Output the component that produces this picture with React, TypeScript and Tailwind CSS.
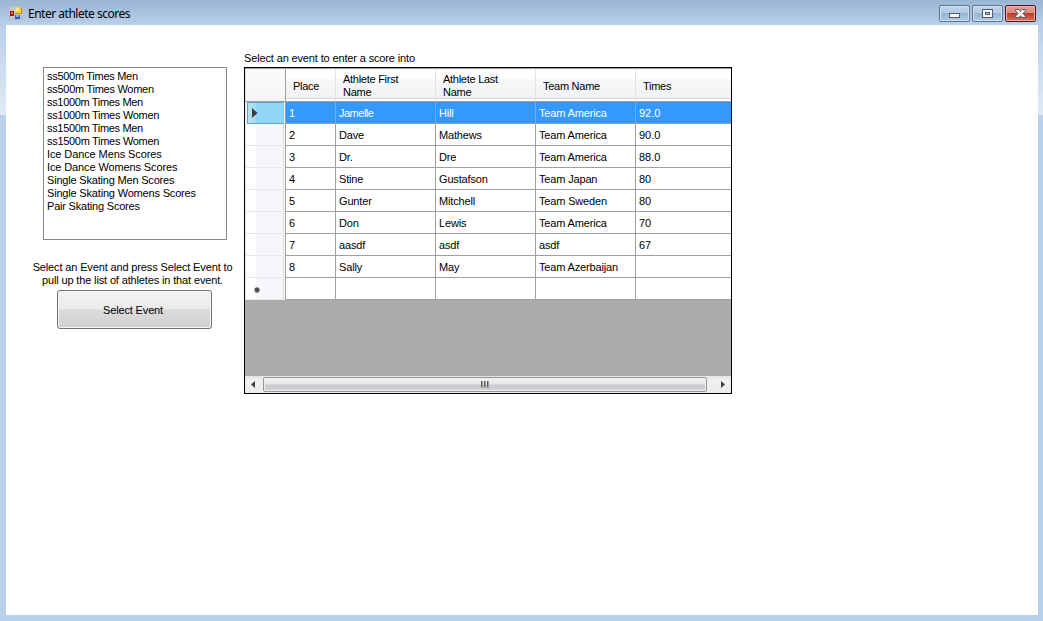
import React from "react";

const events = [
  { name: "ss500m Times Men", tracking: "tracking-[-0.29px]" },
  { name: "ss500m Times Women", tracking: "tracking-[-0.27px]" },
  { name: "ss1000m Times Men", tracking: "tracking-[-0.33px]" },
  { name: "ss1000m Times Women", tracking: "tracking-[-0.3px]" },
  { name: "ss1500m Times Men", tracking: "tracking-[-0.33px]" },
  { name: "ss1500m Times Women", tracking: "tracking-[-0.3px]" },
  { name: "Ice Dance Mens Scores", tracking: "tracking-[-0.1px]" },
  { name: "Ice Dance Womens Scores", tracking: "tracking-[-0.12px]" },
  { name: "Single Skating Men Scores", tracking: "tracking-[-0.19px]" },
  { name: "Single Skating Womens Scores", tracking: "tracking-[-0.18px]" },
  { name: "Pair Skating Scores", tracking: "tracking-[-0.2px]" },
];

const columns = ["Place", "Athlete First Name", "Athlete Last Name", "Team Name", "Times"];

const rows = [
  ["1", "Jamelle", "Hill", "Team America", "92.0"],
  ["2", "Dave", "Mathews", "Team America", "90.0"],
  ["3", "Dr.", "Dre", "Team America", "88.0"],
  ["4", "Stine", "Gustafson", "Team Japan", "80"],
  ["5", "Gunter", "Mitchell", "Team Sweden", "80"],
  ["6", "Don", "Lewis", "Team America", "70"],
  ["7", "aasdf", "asdf", "asdf", "67"],
  ["8", "Sally", "May", "Team Azerbaijan", ""],
  ["", "", "", "", ""],
];

const gridCols = "grid grid-cols-[41px_50px_100px_100px_100px_95px]";

function AppIcon() {
  return (
    <svg width="14" height="14" viewBox="0 0 14 14" shapeRendering="crispEdges">
      <rect width="14" height="14" fill="#b9bcc0" />
      <rect x="1" y="1" width="12" height="12" fill="#bfc8d2" />
      <rect x="1" y="5" width="4" height="5" fill="#a80f08" />
      <rect x="2" y="6" width="2" height="2" fill="#ee6d52" />
      <rect x="6" y="1" width="7" height="7" fill="#c78d0a" />
      <rect x="6" y="1" width="6" height="6" fill="#ffcf35" />
      <rect x="7" y="2" width="3" height="3" fill="#ffe88c" />
      <rect x="6" y="9" width="5" height="4" fill="#2b5cc4" />
      <rect x="7" y="9" width="3" height="2" fill="#7fa9f0" />
    </svg>
  );
}

function CaptionButton({ close, children }: { close?: boolean; children: React.ReactNode }) {
  const skin = close
    ? "border-[#4c1522] bg-[linear-gradient(#e5a197_0px,#dc8a7c_7px,#bd3a22_7px,#d0705a_15px)] shadow-[inset_0_0_0_1px_#e9b0a5]"
    : "border-[#5f7590] bg-[linear-gradient(#bfd3e8_0px,#b2cae3_7px,#94b3d3_7px,#b0cce6_15px)] shadow-[inset_0_0_0_1px_#cfe0f0]";
  return (
    <button className={`flex h-[17px] w-[31px] items-center justify-center rounded-[2px] border ${skin}`}>
      {children}
    </button>
  );
}

function TitleBar() {
  return (
    <header className="flex h-[25px] items-start bg-[linear-gradient(#9bb6d3_0px,#a5bfdc_10px,#b9d0ea_25px)] pl-[9px] pr-[7px]">
      <div className="pt-[6px]"><AppIcon /></div>
      <h1 className="ml-[5px] mt-[5px] whitespace-nowrap font-['Noto_Sans','Open_Sans',sans-serif] text-[12px] leading-[17px] tracking-[-0.49px] text-black">
        Enter athlete scores
      </h1>
      <div className="ml-auto flex gap-[2px] pt-[5px]">
        <CaptionButton>
          <svg width="11" height="15" viewBox="0 0 11 15" shapeRendering="crispEdges">
            <rect x="0" y="7" width="11" height="5" fill="#535b6d" />
            <rect x="1" y="8" width="9" height="3" fill="#f4f4f4" />
          </svg>
        </CaptionButton>
        <CaptionButton>
          <svg width="11" height="15" viewBox="0 0 11 15" shapeRendering="crispEdges">
            <rect x="0" y="3" width="11" height="9" fill="#535b6d" />
            <rect x="1" y="4" width="9" height="7" fill="#f4f4f4" />
            <rect x="3" y="6" width="5" height="3" fill="#535b6d" />
            <rect x="4" y="7" width="3" height="1" fill="#a9c3df" />
          </svg>
        </CaptionButton>
        <CaptionButton close>
          <svg width="13" height="15" viewBox="0 0 13 15">
            <path d="M1.5 3.5H4.8L6.5 5.2L8.2 3.5H11.5V4.8L9 7.5L11.5 10.2V11.5H8.2L6.5 9.8L4.8 11.5H1.5V10.2L4 7.5L1.5 4.8Z" fill="#f3f3f3" stroke="#535766" />
          </svg>
        </CaptionButton>
      </div>
    </header>
  );
}

function RowHeader({ index }: { index: number }) {
  const selected = index === 0;
  if (selected) {
    return (
      <div className="flex h-[22px] border-r border-[#a0a0a0] bg-[#e8f0f5] pl-[2px] pr-px">
        <div className="flex h-[22px] grow items-center border-b border-l border-t border-[#5fa6c6] bg-[linear-gradient(90deg,#b7dff2_0px,#a6daf2_8px,#8fd5f6_8px)] pl-[4px]">
          <svg width="6" height="10" viewBox="0 0 6 10"><path d="M0 0L5.5 5L0 10Z" fill="#3b3b3b" /></svg>
        </div>
      </div>
    );
  }
  return (
    <div className="flex h-[22px] items-center border-r border-[#a0a0a0] bg-[linear-gradient(90deg,#e5e5e5_1px,#ffffff_1px,#ffffff_11px,#f5f7fa_11px,#f4f6f9_38px,#dcdcdc_38px,#dcdcdc_39px,#ffffff_39px)]">
      <div className="flex h-full w-full items-center border-b border-[#e6e8ea] pl-[9px] pt-[2px]">
        {index === 8 && (
          <svg width="6" height="6" viewBox="0 0 6 6">
            <path d="M3 0V6M0 3H6M1 1L5 5M5 1L1 5" stroke="#444444" strokeWidth="1.1" />
          </svg>
        )}
      </div>
    </div>
  );
}

function ScoreGrid() {
  return (
    <section className="flex h-[327px] w-[488px] flex-col overflow-hidden border border-black bg-[#ababab]">
      <div className={`${gridCols} h-[34px] shrink-0 border-b border-t border-[#a0a0a0] bg-[linear-gradient(#ffffff_0px,#ffffff_10px,#f7f8fa_10px,#f1f2f4_29px,#d5d5d5_29px,#d5d5d5_30px,#ffffff_30px)]`}>
        <div className="border-l border-r border-l-[#e0e0e0] border-r-[#a0a0a0] bg-[linear-gradient(#fbfbfb,#f4f5f7)]" />
        {columns.map((name, i) => (
          <div key={name} className={`flex items-center pl-[7px] pr-[20px] pt-[2px] leading-[13px] tracking-[-0.27px] ${i < 4 ? "border-r border-[#e1e2e3]" : ""}`}>
            {name}
          </div>
        ))}
      </div>
      {rows.map((row, r) => (
        <div key={r} className={`${gridCols} h-[22px] shrink-0 ${r === 0 ? "bg-[#3399ff] text-white" : "bg-white"}`}>
          <RowHeader index={r} />
          {row.map((cell, c) => (
            <div key={c} className={`flex items-center whitespace-nowrap border-b border-[#a0a0a0] pl-[3px] pt-[2px] leading-[13px] ${cell === "Jamelle" ? "tracking-[-0.5px]" : c === 4 ? "tracking-normal" : "tracking-[-0.16px]"} ${c < 4 ? "border-r" : ""}`}>
              {cell}
            </div>
          ))}
        </div>
      ))}
      <div className="mt-auto flex h-[17px] shrink-0 bg-[linear-gradient(#e3e3e3,#f0f0f0_4px,#ececec)]">
        <div className="flex w-[18px] items-center justify-center pr-[2px]">
          <svg width="4" height="7" viewBox="0 0 4 7"><path d="M4 0V7L0 3.5Z" fill="#404040" /></svg>
        </div>
        <div className="mt-px flex h-[15px] w-[444px] items-center justify-center rounded-[2px] border border-[#979797] bg-[linear-gradient(#f4f4f4_0px,#e6e6e7_6px,#c9cacd_7px,#d3d4d7_13px)] shadow-[inset_0_0_0_1px_#eeeeee]">
          <svg width="8" height="7" viewBox="0 0 8 7" shapeRendering="crispEdges">
            <path d="M0 0H2V7H0ZM3 0H5V7H3ZM6 0H8V7H6Z" fill="#a0a0a0" />
            <path d="M0 0H1V6H0ZM3 0H4V6H3ZM6 0H7V6H6Z" fill="#5b5b5b" />
          </svg>
        </div>
        <div className="flex grow items-center justify-center pl-[7px]">
          <svg width="4" height="7" viewBox="0 0 4 7"><path d="M0 0V7L4 3.5Z" fill="#404040" /></svg>
        </div>
      </div>
    </section>
  );
}

export default function App() {
  return (
    <div className="flex h-[621px] w-[1043px] flex-col overflow-hidden bg-[#b9d1ea] font-['Liberation_Sans',Arial,sans-serif] text-[11px] leading-[13px] text-black">
      <TitleBar />
      <div className="flex h-[590px] bg-[linear-gradient(#b9d0ea_0px,#dfeaf6_90px,#b9d1ea_90px)]">
        <main className="ml-[6px] mr-[5px] flex grow bg-white">
          <div className="flex w-[238px] flex-col pl-[25px] pt-[42px]">
            <ul className="ml-3 h-[173px] w-[184px] border border-[#828790] pl-[3px] pt-[2px]">
              {events.map((e) => (
                <li key={e.name} className={`whitespace-nowrap ${e.tracking}`}>{e.name}</li>
              ))}
            </ul>
            <p className="mt-[21px] w-[203px] whitespace-nowrap text-center tracking-[-0.14px]">
              Select an Event and press Select Event to
              <br />
              pull up the list of athletes in that event.
            </p>
            <button className="ml-[26px] mt-[3px] h-[39px] w-[155px] rounded-[3px] border border-[#707070] bg-[linear-gradient(#f2f2f2_0%,#ebebeb_48%,#dddddd_50%,#cfcfcf_100%)] pr-[3px] pt-[2px] tracking-[-0.15px] shadow-[inset_0_0_0_1px_#f6f6f6]">
              Select Event
            </button>
          </div>
          <div className="pt-[27px]">
            <p className="mb-[2px] whitespace-nowrap tracking-[-0.14px]">Select an event to enter a score into</p>
            <ScoreGrid />
          </div>
        </main>
      </div>
    </div>
  );
}
